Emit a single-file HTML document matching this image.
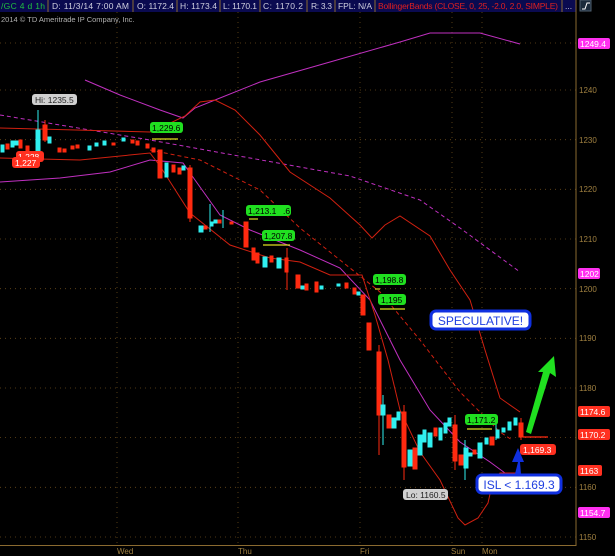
<!DOCTYPE html>
<html><head><meta charset="utf-8"><style>
html,body{margin:0;padding:0;background:#000;width:615px;height:556px;overflow:hidden}
svg{display:block}
text{font-family:"Liberation Sans",sans-serif}
</style></head><body>
<svg width="615" height="556" viewBox="0 0 615 556" xmlns="http://www.w3.org/2000/svg">
<rect width="615" height="556" fill="#000"/>
<!-- header -->
<rect x="0" y="0" width="576" height="12" fill="#0a0a50"/>
<g stroke="#8a6a30" stroke-width="1">
<line x1="48" y1="0" x2="48" y2="12"/><line x1="133" y1="0" x2="133" y2="12"/><line x1="177" y1="0" x2="177" y2="12"/><line x1="220" y1="0" x2="220" y2="12"/><line x1="260" y1="0" x2="260" y2="12"/><line x1="307" y1="0" x2="307" y2="12"/><line x1="335" y1="0" x2="335" y2="12"/><line x1="375" y1="0" x2="375" y2="12"/><line x1="562" y1="0" x2="562" y2="12"/>
</g>
<g font-size="8.5" fill="#d0d0e0">
<text x="1" y="9" fill="#20c040" textLength="44">/GC 4 d 1h</text>
<text x="52" y="9" textLength="77">D: 11/3/14 7:00 AM</text>
<text x="137" y="9" textLength="37">O: 1172.4</text>
<text x="180" y="9" textLength="37">H: 1173.4</text>
<text x="223" y="9" textLength="34">L: 1170.1</text>
<text x="263" y="9" textLength="40">C: 1170.2</text>
<text x="311" y="9" textLength="21">R: 3.3</text>
<text x="338" y="9" textLength="34">FPL: N/A</text>
<text x="378" y="9" fill="#e02020" textLength="180">BollingerBands (CLOSE, 0, 25, -2.0, 2.0, SIMPLE)</text>
<text x="565" y="9">...</text>
</g>
<rect x="580" y="0" width="11" height="11" fill="#1a2a3a" stroke="#506070"/>
<path d="M582 9 L585 9 L587 3 L590 3" stroke="#fff" fill="none"/>
<text x="1" y="22" font-size="7.5" fill="#b0b0b0">2014 © TD Ameritrade IP Company, Inc.</text>
<!-- grid -->
<g stroke="#6a4a1a" stroke-width="0.8" stroke-dasharray="1,4">
<line x1="0" y1="43" x2="576" y2="43"/>
<line x1="0" y1="90" x2="576" y2="90"/><line x1="0" y1="139.7" x2="576" y2="139.7"/><line x1="0" y1="189.3" x2="576" y2="189.3"/><line x1="0" y1="239" x2="576" y2="239"/><line x1="0" y1="288.7" x2="576" y2="288.7"/><line x1="0" y1="338.3" x2="576" y2="338.3"/><line x1="0" y1="388" x2="576" y2="388"/><line x1="0" y1="437.6" x2="576" y2="437.6"/><line x1="0" y1="487.3" x2="576" y2="487.3"/><line x1="0" y1="537" x2="576" y2="537"/>
<line x1="117" y1="12" x2="117" y2="545"/><line x1="238" y1="12" x2="238" y2="545"/><line x1="360" y1="12" x2="360" y2="545"/><line x1="452" y1="12" x2="452" y2="545"/><line x1="482" y1="12" x2="482" y2="545"/>
</g>
<line x1="576" y1="0" x2="576" y2="546" stroke="#8a6a30"/>
<line x1="0" y1="545.5" x2="576" y2="545.5" stroke="#8a6a30"/>
<g font-size="8" fill="#a08040">
<text x="579" y="93">1240</text><text x="579" y="143">1230</text><text x="579" y="192">1220</text><text x="579" y="242">1210</text><text x="579" y="292">1200</text><text x="579" y="341">1190</text><text x="579" y="391">1180</text><text x="579" y="490">1160</text><text x="579" y="540">1150</text>
<text x="117" y="554">Wed</text><text x="238" y="554">Thu</text><text x="360" y="554">Fri</text><text x="451" y="554">Sun</text><text x="482" y="554">Mon</text>
</g>
<!-- lines -->
<g fill="none" stroke-width="1">
<path stroke="#c030c0" d="M85 80 L120 95 L160 110 L183 118 L195 108 L215 100 L260 82 L330 62 L400 42 L430 33 L480 33 L520 44"/>
<path stroke="#c030c0" d="M0 182 L60 178 L110 172 L150 160 L183 163 L195 180 L220 215 L250 230 L300 250 L340 268 L370 300 L400 360 L430 410 L460 442 L490 462 L520 484"/>
<path stroke="#c030c0" stroke-dasharray="4,3" d="M0 115 L150 140 L250 158 L350 176 L420 200 L460 228 L520 272"/>
<path stroke="#d02010" d="M0 128 L150 132 L160 128 L185 116 L200 102 L215 100 L235 110 L260 135 L290 172 L330 198 L360 225 L372 238 L385 225 L400 216 L430 236 L450 270 L470 300 L485 350 L500 398 L520 412"/>
<path stroke="#d02010" d="M0 158 L80 160 L150 153 L160 166 L190 213 L230 245 L270 258 L300 262 L330 275 L362 275 L375 315 L388 360 L400 410 L420 452 L440 480 L458 518 L465 525 L478 518 L488 503 L492 485 L500 473 L520 473"/>
<path stroke="#d02010" stroke-dasharray="4,3" d="M150 150 L200 160 L260 190 L300 228 L340 260 L380 292 L420 340 L460 392 L500 432 L512 440"/>
</g>
<!-- candles -->
<g>
<g fill="#ff2a10" stroke="#ff2a10" stroke-width="1">
<rect x="6" y="144" width="3" height="5"/><rect x="19" y="140" width="3" height="8"/><rect x="26" y="146" width="3" height="6"/><rect x="43" y="125" width="4" height="15"/><rect x="58" y="148" width="3" height="4"/><rect x="63" y="149" width="3" height="3"/><rect x="71" y="146" width="3" height="3"/><rect x="76" y="145" width="3" height="3"/><rect x="112" y="143" width="3" height="2"/><rect x="131" y="140" width="3" height="3"/><rect x="136" y="141" width="3" height="4"/><rect x="146" y="144" width="3" height="4"/><rect x="152" y="148" width="3" height="4"/>
<rect x="158" y="150" width="4" height="28"/><rect x="172" y="165" width="3" height="7"/><rect x="178" y="168" width="3" height="6"/><rect x="188" y="168" width="4" height="50"/><rect x="204" y="226" width="3" height="3"/><rect x="218" y="220" width="3" height="3"/><rect x="230" y="222" width="3" height="2"/><rect x="244" y="222" width="4" height="25"/><rect x="252" y="248" width="3" height="12"/><rect x="256" y="253" width="3" height="10"/><rect x="270" y="256" width="3" height="6"/><rect x="285" y="258" width="3" height="14"/><rect x="296" y="275" width="4" height="13"/><rect x="305" y="284" width="3" height="6"/><rect x="315" y="282" width="3" height="10"/><rect x="345" y="283" width="3" height="5"/><rect x="353" y="288" width="3" height="6"/><rect x="361" y="295" width="4" height="20"/><rect x="367" y="323" width="4" height="27"/><rect x="377" y="352" width="4" height="63"/><rect x="387" y="415" width="4" height="13"/><rect x="402" y="412" width="4" height="55"/><rect x="413" y="448" width="4" height="21"/><rect x="434" y="428" width="3" height="8"/><rect x="453" y="425" width="4" height="36"/><rect x="459" y="455" width="4" height="10"/><rect x="473" y="450" width="3" height="4"/><rect x="490" y="437" width="4" height="8"/><rect x="519" y="423" width="4" height="14"/>
</g>
<g fill="#30f0f0" stroke="#30f0f0" stroke-width="1">
<rect x="1" y="145" width="3" height="7"/><rect x="11" y="141" width="3" height="6"/><rect x="15" y="141" width="3" height="4"/><rect x="36" y="130" width="4" height="23"/><rect x="48" y="137" width="3" height="6"/><rect x="88" y="146" width="3" height="4"/><rect x="95" y="143" width="3" height="3"/><rect x="103" y="141" width="3" height="4"/><rect x="122" y="138" width="3" height="3"/><rect x="165" y="163" width="3" height="14"/><rect x="182" y="166" width="3" height="4"/><rect x="199" y="226" width="4" height="6"/><rect x="210" y="222" width="3" height="4"/><rect x="214" y="220" width="3" height="3"/><rect x="263" y="257" width="4" height="10"/><rect x="277" y="258" width="4" height="10"/><rect x="301" y="286" width="3" height="3"/><rect x="320" y="286" width="3" height="3"/><rect x="337" y="284" width="3" height="2"/><rect x="357" y="292" width="3" height="3"/><rect x="381" y="405" width="4" height="10"/><rect x="392" y="418" width="4" height="10"/><rect x="397" y="412" width="3" height="8"/><rect x="408" y="450" width="4" height="16"/><rect x="418" y="435" width="4" height="20"/><rect x="423" y="430" width="3" height="12"/><rect x="428" y="433" width="4" height="14"/><rect x="439" y="428" width="3" height="12"/><rect x="444" y="423" width="3" height="10"/><rect x="448" y="418" width="3" height="8"/><rect x="464" y="448" width="4" height="20"/><rect x="469" y="453" width="3" height="3"/><rect x="478" y="443" width="4" height="15"/><rect x="485" y="438" width="3" height="6"/><rect x="496" y="430" width="3" height="8"/><rect x="502" y="428" width="3" height="4"/><rect x="508" y="422" width="3" height="8"/><rect x="514" y="418" width="3" height="7"/>
</g>
<g stroke="#30f0f0" stroke-width="1"><line x1="38" y1="110" x2="38" y2="155"/><line x1="210" y1="204" x2="210" y2="232"/><line x1="223" y1="210" x2="223" y2="228"/><line x1="383" y1="395" x2="383" y2="445"/><line x1="465" y1="440" x2="465" y2="480"/><line x1="496" y1="420" x2="496" y2="440"/></g>
<g stroke="#ff2a10" stroke-width="1"><line x1="45" y1="120" x2="45" y2="142"/><line x1="190" y1="165" x2="190" y2="222"/><line x1="287" y1="248" x2="287" y2="290"/><line x1="379" y1="345" x2="379" y2="455"/><line x1="404" y1="405" x2="404" y2="480"/><line x1="455" y1="415" x2="455" y2="470"/><line x1="521" y1="418" x2="521" y2="440"/></g>
</g>
<!-- level lines -->
<g stroke="#e0e020" stroke-width="1.2">
<line x1="152" y1="139" x2="178" y2="139"/><line x1="249" y1="219" x2="258" y2="219"/><line x1="263" y1="245" x2="290" y2="245"/><line x1="375" y1="289" x2="380" y2="289"/><line x1="380" y1="309" x2="405" y2="309"/><line x1="467" y1="429" x2="492" y2="429"/>
</g>
<line x1="523" y1="437" x2="548" y2="437" stroke="#ff2a10" stroke-width="1.2"/>
<!-- green labels -->
<g font-size="8.5" fill="#000">
<rect x="257" y="205" width="34" height="11" rx="3" fill="#20e020"/><text x="283" y="214">.6</text>
<rect x="150" y="122" width="33" height="11" rx="3" fill="#20e020"/><text x="152" y="131">1,229.6</text>
<rect x="246" y="205" width="33" height="11" rx="3" fill="#20e020"/><text x="248" y="214">1,213.1</text>
<rect x="262" y="230" width="33" height="11" rx="3" fill="#20e020"/><text x="264" y="239">1,207.8</text>
<rect x="373" y="274" width="33" height="11" rx="3" fill="#20e020"/><text x="375" y="283">1,198.8</text>
<rect x="378" y="294" width="28" height="11" rx="3" fill="#20e020"/><text x="381" y="303">1,195</text>
<rect x="465" y="414" width="33" height="11" rx="3" fill="#20e020"/><text x="467" y="423">1,171.2</text>
</g>
<g font-size="8.5" fill="#fff">
<rect x="16" y="151" width="28" height="11" rx="3" fill="#ff3020"/><text x="18" y="160">1,228</text>
<rect x="12" y="157" width="28" height="11" rx="3" fill="#ff3020"/><text x="15" y="166">1,227</text>
<rect x="520" y="444" width="36" height="11" rx="3" fill="#ff3020"/><text x="523" y="453">1,169.3</text>
<rect x="578" y="406" width="32" height="11" rx="2" fill="#ff3020"/><text x="580" y="415">1174.6</text>
<rect x="578" y="429" width="32" height="11" rx="2" fill="#ff3020"/><text x="580" y="438">1170.2</text>
<rect x="578" y="465" width="24" height="11" rx="2" fill="#ff3020"/><text x="580" y="474">1163</text>
<rect x="578" y="38" width="32" height="11" rx="2" fill="#ff30f0"/><text x="580" y="47">1249.4</text>
<rect x="578" y="268" width="22" height="11" rx="2" fill="#ff30f0"/><text x="580" y="277">1202</text>
<rect x="578" y="507" width="32" height="11" rx="2" fill="#ff30f0"/><text x="580" y="516">1154.7</text>
</g>
<g font-size="8.5" fill="#222">
<rect x="32" y="94" width="45" height="11" rx="3" fill="#d0d0d0"/><text x="35" y="103">Hi: 1235.5</text>
<rect x="403" y="489" width="45" height="11" rx="3" fill="#d0d0d0"/><text x="406" y="498">Lo: 1160.5</text>
</g>
<!-- callouts -->
<rect x="431" y="311" width="99" height="18" rx="5" fill="#fff" stroke="#1030e0" stroke-width="3"/>
<text x="480.5" y="325" font-size="12" fill="#2040e0" text-anchor="middle">SPECULATIVE!</text>
<rect x="477" y="475" width="84" height="18" rx="5" fill="#fff" stroke="#1030e0" stroke-width="3"/>
<text x="519" y="489" font-size="12" fill="#2040e0" text-anchor="middle">ISL &lt; 1.169.3</text>
<!-- arrows -->
<path d="M515 474 L518 462 L512 462 L518 448 L524 462 L520 462 L521 474 Z" fill="#1030e0"/>
<path d="M526 432 L543 372 L538 372 L554 356 L556 377 L550 373 L531 434 Z" fill="#20e020"/>
</svg>
</body></html>
